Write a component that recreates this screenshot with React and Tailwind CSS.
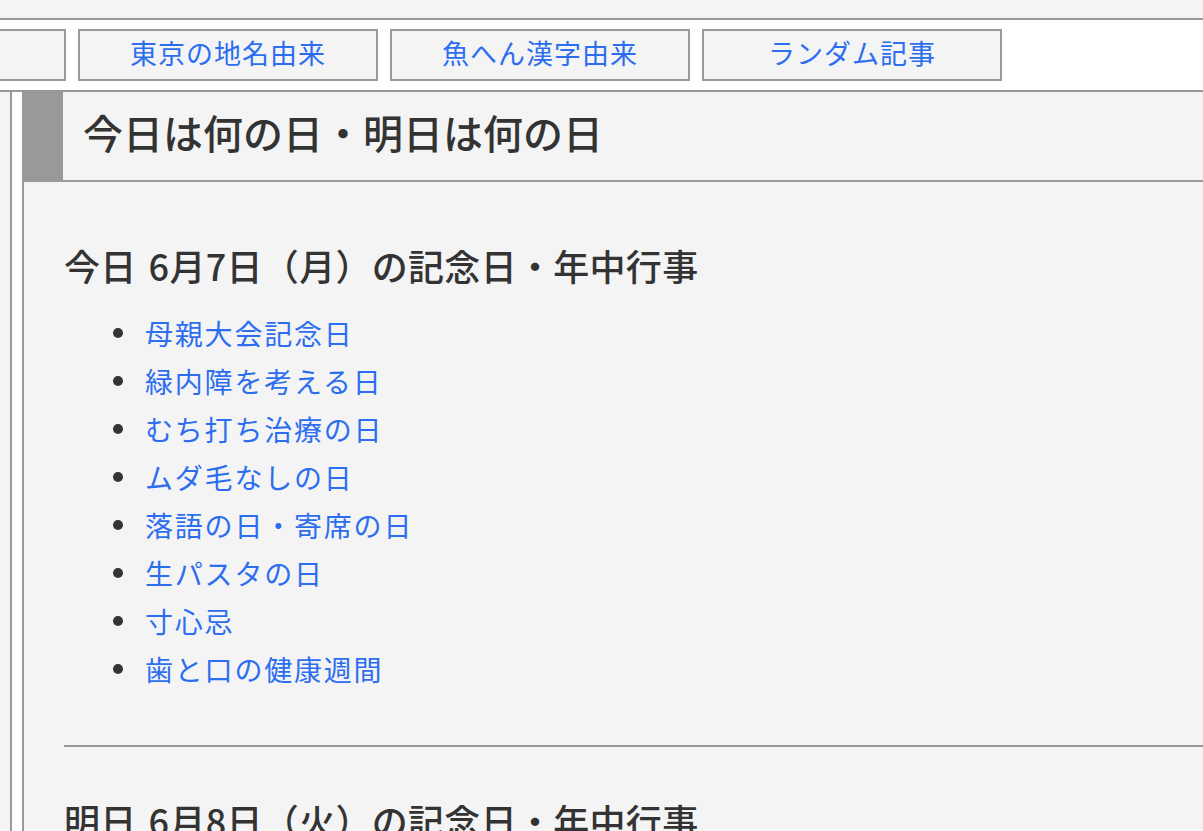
import React from 'react'

const navItems = ['', '東京の地名由来', '魚へん漢字由来', 'ランダム記事']

const todayItems = [
  '母親大会記念日',
  '緑内障を考える日',
  'むち打ち治療の日',
  'ムダ毛なしの日',
  '落語の日・寄席の日',
  '生パスタの日',
  '寸心忌',
  '歯と口の健康週間',
]

function NavButton({ label }) {
  return (
    <a
      href="#"
      className="w-[300px] h-[52px] shrink-0 flex items-center justify-center pb-[4px] bg-[#f4f4f4] border-2 border-[#999] text-[#2d6ef0] text-[27px] tracking-[1px] no-underline"
    >
      {label}
    </a>
  )
}

function DayHeading({ day, date }) {
  return (
    <h2 className="text-[36px] leading-[40px] tracking-[0.3px] font-medium">
      {day}
      <span className="ml-[12px]">{date}</span>の記念日・年中行事
    </h2>
  )
}

function DayList({ items }) {
  return (
    <ul className="mt-[24px]">
      {items.map((item) => (
        <li key={item} className="flex items-center h-[48px]">
          <span className="w-[10px] h-[10px] rounded-full bg-[#333] ml-[49px] shrink-0" />
          <a href="#" className="ml-[22px] text-[28px] tracking-[1.8px] text-[#2d6ef0] leading-[48px]">
            {item}
          </a>
        </li>
      ))}
    </ul>
  )
}

export default function App() {
  return (
    <div className="h-screen overflow-hidden bg-[#f4f4f4] text-[#333] font-['Noto_Sans_CJK_JP','Noto_Sans_CJK_SC',sans-serif]">
      <div className="h-[18px]" />

      {/* global nav */}
      <nav className="h-[74px] bg-white border-y-2 border-[#999] flex items-start gap-3 pt-[9px] ml-[-234px]">
        {navItems.map((label, i) => (
          <NavButton key={i} label={label} />
        ))}
      </nav>

      <div className="flex bg-white h-full">
        <div className="w-[12px] shrink-0 bg-[#f4f4f4] border-r-2 border-[#999]" />
        <main className="ml-[10px] flex-1 bg-[#f4f4f4] border-l-2 border-[#999]">
          <div className="flex h-[90px] border-b-2 border-[#999]">
            <div className="w-[39px] bg-[#999] shrink-0" />
            <h1 className="pl-[20px] pb-[8px] flex items-center text-[40px] font-medium text-[#333]">
              今日は何の日・明日は何の日
            </h1>
          </div>

          <section className="pl-[40px]">
            <div className="mt-[63px]">
              <DayHeading day="今日" date="6月7日（月）" />
            </div>
            <DayList items={todayItems} />

            <hr className="mt-[52px] border-0 h-[2px] bg-[#999]" />

            <div className="mt-[53px]">
              <DayHeading day="明日" date="6月8日（火）" />
            </div>
          </section>
        </main>
      </div>
    </div>
  )
}
